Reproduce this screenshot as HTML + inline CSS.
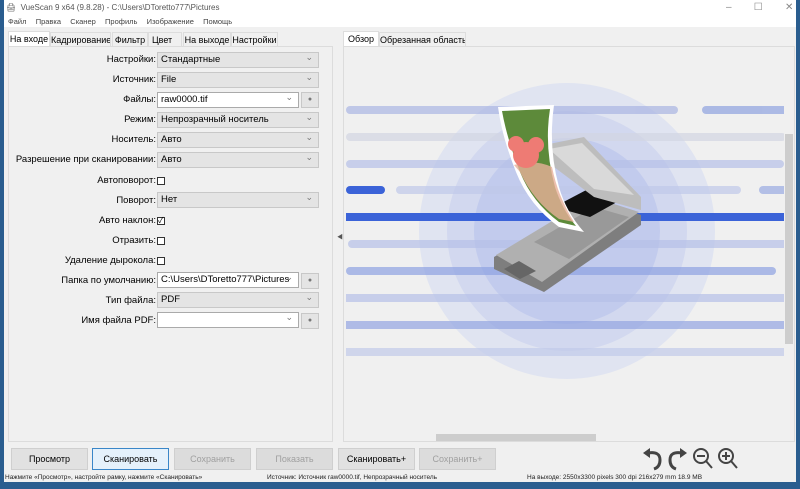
<!DOCTYPE html>
<html><head><meta charset="utf-8"><style>
*{margin:0;padding:0;box-sizing:border-box}
body{width:800px;height:489px;overflow:hidden;background:#2a5d8f;font-family:"Liberation Sans","Noto Sans CJK SC",sans-serif;font-size:9.5px;color:#000;position:relative}
.win{position:absolute;left:4px;top:0;width:792px;height:482px;background:#f0f0f0}
.abs{position:absolute}
.title{left:0;top:0;width:792px;height:27px;background:#fff}
.t{position:absolute;white-space:nowrap}
.tab{position:absolute;top:32px;height:14px;font-size:9px;line-height:14px;text-align:center;border:1px solid #ddd;border-bottom:none;background:#f0f0f0;white-space:nowrap;overflow:hidden}
.tab.on{background:#fff;top:31px;height:16px}
.panel{position:absolute;background:#f0f0f0;border:1px solid #dcdcdc}
.combo{position:absolute;left:153px;height:16px;border:1px solid #c8c8c8;background:#e4e4e4;font-size:9.5px;line-height:14px;padding-left:3px}
.combo.w{background:#fff;border-color:#aaa}
.combo:after{content:"⌄";position:absolute;right:5px;top:-3px;color:#777;font-size:9px}
.btn2{position:absolute;left:297px;width:18px;height:16px;border:1px solid #c8c8c8;background:#e4e4e4;text-align:center;font-size:7px;line-height:14px;color:#777}
.chk{position:absolute;left:153px;width:8px;height:8px;border:1px solid #333;background:#fff;font-size:8px;line-height:6px}
.b{position:absolute;top:448px;width:77px;height:22px;border:1px solid #cfcfcf;background:#e1e1e1;font-size:9px;line-height:20px;text-align:center}
.b.dis{color:#a0a0a0;background:#dcdcdc}
.lb{position:absolute;left:0;width:152px;text-align:right}
</style></head><body>
<div class="win">
<div class="abs title"></div>
<div class="t" style="left:2px;top:3px;font-size:8px;color:#555">🖨&nbsp; VueScan 9 x64 (9.8.28) - C:\Users\DToretto777\Pictures</div>
<div class="t" style="left:722px;top:2px;color:#888;font-size:10px">–&nbsp;&nbsp;&nbsp;&nbsp;&nbsp;&nbsp;&nbsp;&nbsp;☐&nbsp;&nbsp;&nbsp;&nbsp;&nbsp;&nbsp;&nbsp;&nbsp;✕</div>
<div class="t" style="left:4px;top:17px;font-size:7.5px;color:#444;word-spacing:1px">Файл&nbsp;&nbsp; Правка&nbsp;&nbsp; Сканер&nbsp;&nbsp; Профиль&nbsp;&nbsp; Изображение&nbsp;&nbsp; Помощь</div>

<div class="tab on" style="left:4px;width:42px">На входе</div>
<div class="tab" style="left:46px;width:61px">Кадрирование</div>
<div class="tab" style="left:108px;width:36px">Фильтр</div>
<div class="tab" style="left:144px;width:34px;text-align:left;padding-left:3px">Цвет</div>
<div class="tab" style="left:179px;width:48px">На выходе</div>
<div class="tab" style="left:227px;width:47px">Настройки</div>

<div class="panel" style="left:4px;top:46px;width:325px;height:396px"></div>

<div class="tab on" style="left:339px;width:36px">Обзор</div>
<div class="tab" style="left:375px;width:87px">Обрезанная область</div>
<div class="panel" style="left:339px;top:46px;width:452px;height:396px;overflow:hidden">
 <svg width="450" height="390" style="position:absolute;left:0;top:0">
  <circle cx="223" cy="184" r="148" fill="#e0e4f1"/>
  <circle cx="223" cy="184" r="120" fill="#d2d8ef"/>
  <circle cx="223" cy="184" r="93" fill="#c2cbed"/>
  <g opacity="0.7">
  <rect x="2" y="59" width="332" height="8" rx="4" fill="#a9b5e3"/>
  <rect x="358" y="59" width="90" height="8" rx="4" fill="#8fa2e0"/>
  <rect x="2" y="86" width="440" height="8" rx="4" fill="#d3d6e3"/>
  <rect x="2" y="113" width="438" height="8" rx="4" fill="#b6c1e8"/>
  <rect x="52" y="139" width="345" height="8" rx="4" fill="#c0c9ea"/>
  <rect x="415" y="139" width="40" height="8" rx="4" fill="#9aabe2"/>
  <rect x="4" y="193" width="440" height="8" rx="4" fill="#b6c1e8"/>
  <rect x="2" y="220" width="430" height="8" rx="4" fill="#8ea2e2"/>
  <rect x="2" y="247" width="440" height="8" fill="#b6c1e8"/>
  <rect x="2" y="274" width="440" height="8" fill="#94a6e2"/>
  <rect x="2" y="301" width="440" height="8" fill="#c2cbea"/>
  </g>
  <rect x="2" y="166" width="440" height="8" fill="#3b63d8"/>
  <rect x="2" y="139" width="39" height="8" rx="4" fill="#3b63d8"/>
  <!-- scanner -->
  <path d="M150 210 L250 152 L297 168 L297 178 L200 245 L150 222 Z" fill="#7e7e7e"/>
  <path d="M152 208 L248 150 L295 165 L198 235 Z" fill="#b0b0b0"/>
  <path d="M190 195 L250 160 L285 170 L225 212 Z" fill="#999"/>
  <path d="M210 160 L248 140 L282 150 L246 170 Z" fill="#111"/>
  <path d="M200 98 L240 90 L297 150 L297 163 L250 150 L210 120 Z" fill="#bdbdbd"/>
  <path d="M205 102 L238 96 L290 148 L250 142 Z" fill="#d9d9d9"/>
  <path d="M160 222 L175 214 L192 224 L176 232 Z" fill="#666"/>
  <path d="M154 60 L210 58 Q204 100 215 140 Q222 165 240 185 L215 180 Q185 158 172 125 Q158 90 154 60 Z" fill="#fff"/>
  <path d="M158 64 L206 62 Q200 100 211 140 Q218 162 232 179 L215 175 Q188 155 176 125 Q163 92 158 64Z" fill="#5d8a3a"/>
  <path d="M170 118 Q190 112 208 120 Q214 150 230 175 L215 172 Q190 155 176 125Z" fill="#e9b09a" opacity="0.8"/>
  <circle cx="182" cy="108" r="13" fill="#ee7b74"/>
  <circle cx="172" cy="97" r="8" fill="#ee7b74"/>
  <circle cx="192" cy="98" r="8" fill="#ee7b74"/>
 </svg>
 <div class="abs" style="left:440px;top:0;width:10px;height:396px;background:#f0f0f0"></div>
 <div class="abs" style="left:441px;top:87px;width:8px;height:210px;background:#cdcdcd"></div>
 <div class="abs" style="left:0;top:386px;width:440px;height:10px;background:#f0f0f0"></div>
 <div class="abs" style="left:92px;top:387px;width:160px;height:8px;background:#cdcdcd"></div>
</div>
<div class="t" style="left:333px;top:232px;font-size:6px;color:#555">◀</div>

<div class="lb" style="top:54px">Настройки:</div><div class="combo" style="top:52px;width:162px">Стандартные</div>
<div class="lb" style="top:74px">Источник:</div><div class="combo" style="top:72px;width:162px">File</div>
<div class="lb" style="top:94px">Файлы:</div><div class="combo w" style="top:92px;width:142px">raw0000.tif</div><div class="btn2" style="top:92px">●</div>
<div class="lb" style="top:114px">Режим:</div><div class="combo" style="top:112px;width:162px">Непрозрачный носитель</div>
<div class="lb" style="top:134px">Носитель:</div><div class="combo" style="top:132px;width:162px">Авто</div>
<div class="lb" style="top:154px">Разрешение при сканировании:</div><div class="combo" style="top:152px;width:162px">Авто</div>
<div class="lb" style="top:175px">Автоповорот:</div><div class="chk" style="top:177px"></div>
<div class="lb" style="top:195px">Поворот:</div><div class="combo" style="top:192px;width:162px">Нет</div>
<div class="lb" style="top:215px">Авто наклон:</div><div class="chk" style="top:217px">✓</div>
<div class="lb" style="top:235px">Отразить:</div><div class="chk" style="top:237px"></div>
<div class="lb" style="top:255px">Удаление дырокола:</div><div class="chk" style="top:257px"></div>
<div class="lb" style="top:275px">Папка по умолчанию:</div><div class="combo w" style="top:272px;width:142px">C:\Users\DToretto777\Pictures</div><div class="btn2" style="top:273px">●</div>
<div class="lb" style="top:295px">Тип файла:</div><div class="combo" style="top:292px;width:162px">PDF</div>
<div class="lb" style="top:315px">Имя файла PDF:</div><div class="combo w" style="top:312px;width:142px"></div><div class="btn2" style="top:313px">●</div>

<div class="b" style="left:7px">Просмотр</div>
<div class="b" style="left:88px;border:1px solid #3a86c8;background:#e5f1fb">Сканировать</div>
<div class="b dis" style="left:170px">Сохранить</div>
<div class="b dis" style="left:252px">Показать</div>
<div class="b" style="left:334px">Сканировать+</div>
<div class="b dis" style="left:415px">Сохранить+</div>
<svg class="abs" style="left:636px;top:447px" width="50" height="24"><g stroke="#444" stroke-width="3" fill="none"><path d="M8 6 Q20 4 20 13 Q20 20 14 22"/><path d="M42 6 Q30 4 30 13 Q30 20 36 22"/></g><path d="M3 6 L10 1 L10 11Z" fill="#444"/><path d="M47 6 L40 1 L40 11Z" fill="#444"/></svg>
<svg class="abs" style="left:688px;top:447px" width="50" height="24"><g stroke="#444" stroke-width="2" fill="none"><circle cx="9" cy="9" r="7"/><line x1="14" y1="14" x2="20" y2="21"/><line x1="5" y1="9" x2="13" y2="9"/><circle cx="34" cy="9" r="7"/><line x1="39" y1="14" x2="45" y2="21"/><line x1="30" y1="9" x2="38" y2="9"/><line x1="34" y1="5" x2="34" y2="13"/></g></svg>
<div class="t" style="left:1px;top:474px;font-size:6.5px;color:#222">Нажмите «Просмотр», настройте рамку, нажмите «Сканировать»</div>
<div class="t" style="left:263px;top:474px;font-size:6.5px;color:#222">Источник: Источник raw0000.tif, Непрозрачный носитель</div>
<div class="t" style="left:523px;top:474px;font-size:6.5px;color:#222">На выходе: 2550x3300 pixels 300 dpi 216x279 mm 18.9 MB</div>
</div>
</body></html>
